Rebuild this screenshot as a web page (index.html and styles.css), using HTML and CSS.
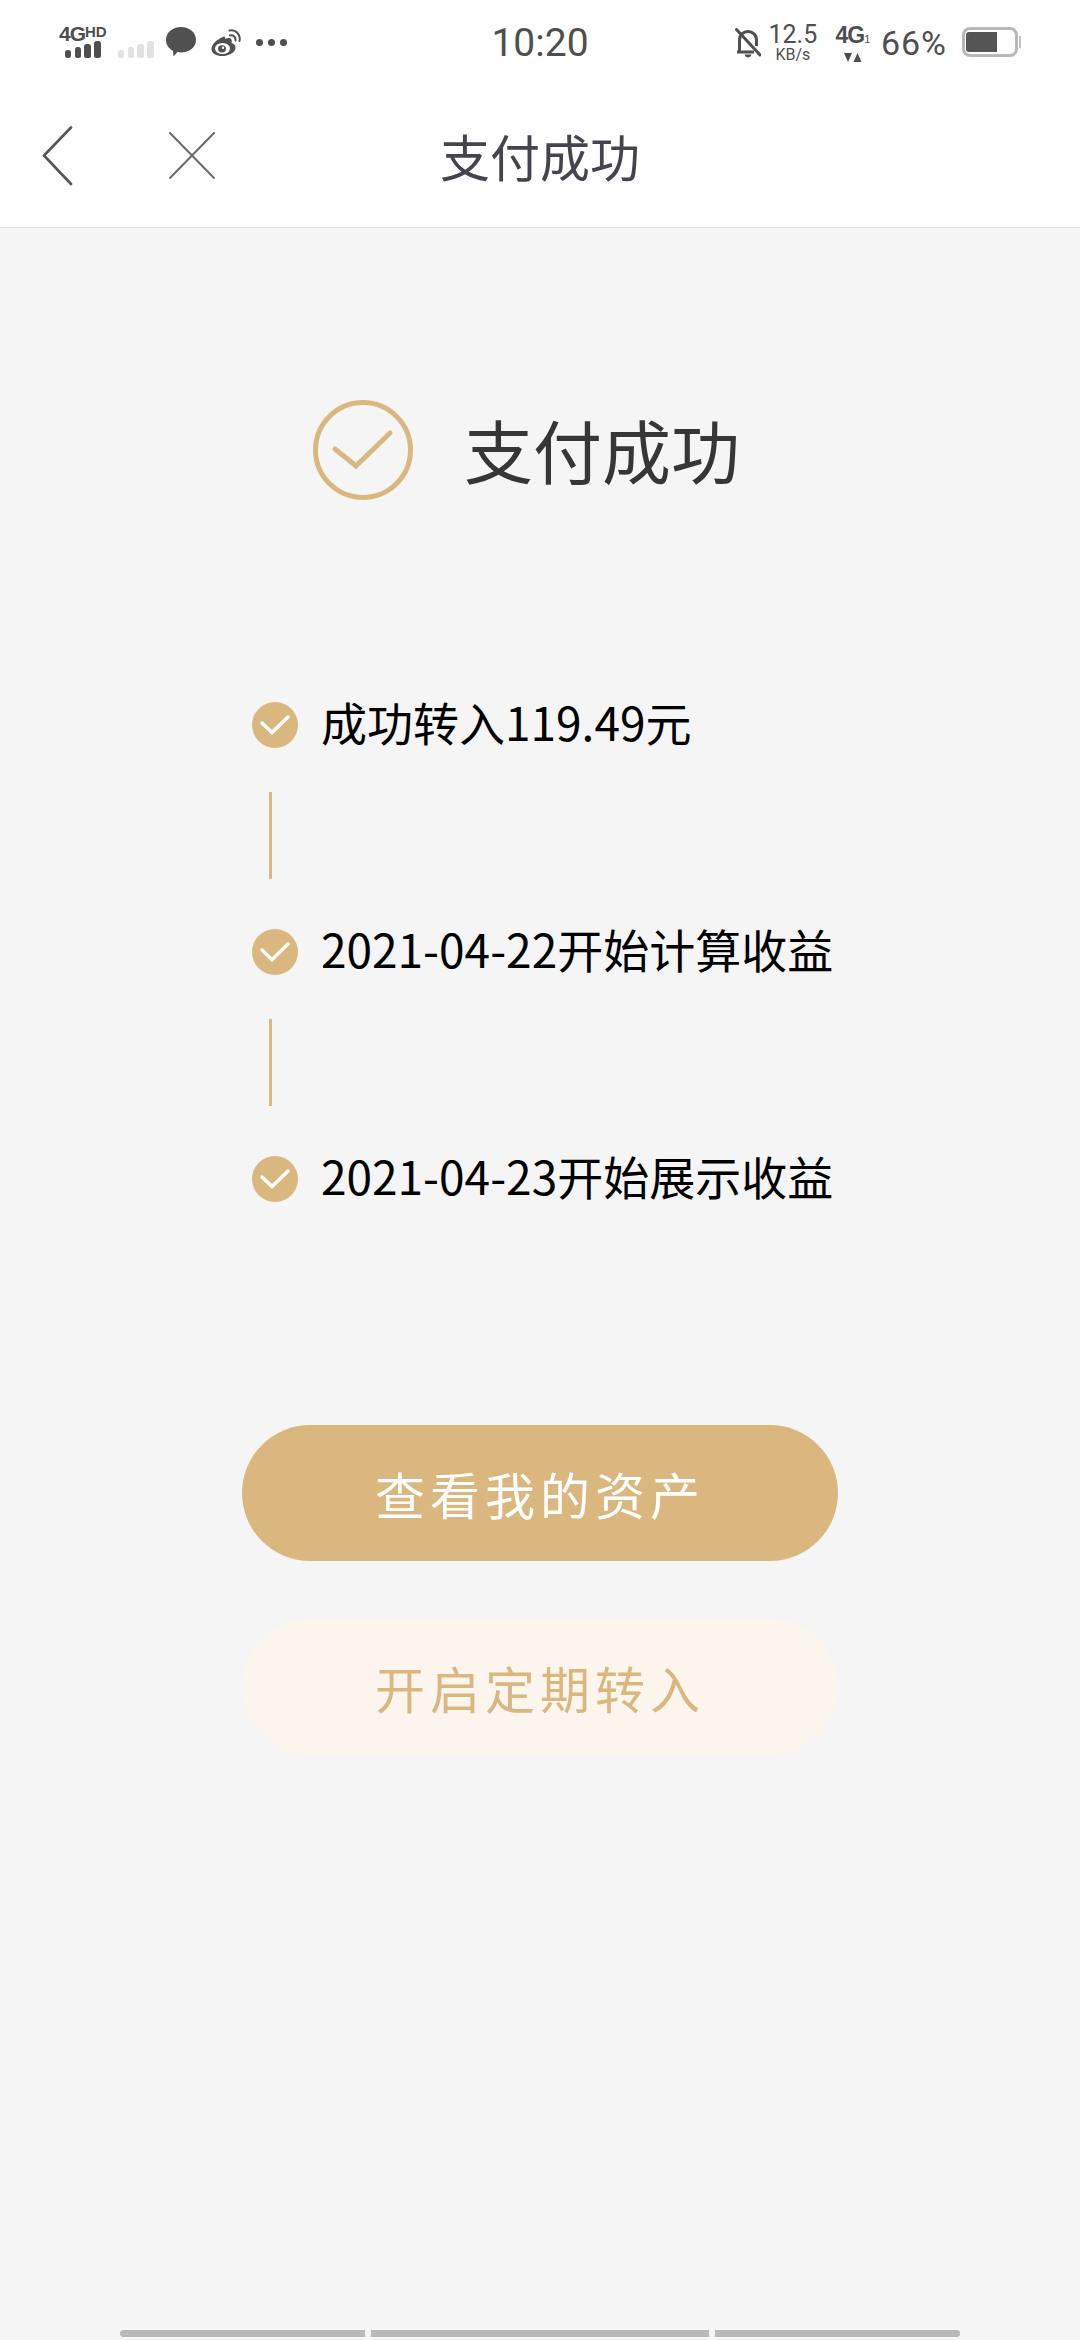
FILE: index.html
```html
<!DOCTYPE html>
<html lang="zh">
<head>
<meta charset="utf-8">
<title>支付成功</title>
<link rel="stylesheet" href="styles.css">
</head>
<body>
<div class="phone">

<div class="statusbar">
	<div class="status-left">
		<div class="net">
			<span class="net-label">4G<sup>HD</sup></span>
			<svg width="36" height="17" viewBox="0 0 36 17"><g fill="#4f4f4f"><rect x="0" y="9" width="6" height="8" rx="2.5"/><rect x="10" y="6" width="6" height="11" rx="2.5"/><rect x="19" y="3" width="7" height="14" rx="2.5"/><rect x="29" y="0" width="7" height="17" rx="2.5"/></g></svg>
		</div>
		<svg class="sig2" width="36" height="17" viewBox="0 0 36 17"><g fill="#e2e2e2"><rect x="0" y="9" width="6" height="8" rx="2.5"/><rect x="10" y="6" width="6" height="11" rx="2.5"/><rect x="19" y="3" width="7" height="14" rx="2.5"/><rect x="29" y="0" width="7" height="17" rx="2.5"/></g></svg>
		<svg class="chat" width="30" height="30" viewBox="0 0 30 30"><path d="M15 0C23.5 0 30 5.5 30 13C30 20.5 23 25.5 15 25.5C13.5 25.5 12.5 25.3 11.5 25.1L7.5 29.5L7 23.8C2.8 21.6 0 17.8 0 13C0 5.5 6.5 0 15 0Z" fill="#505050"/></svg>
		<svg class="weibo" width="30" height="28" viewBox="0 0 30 28"><path d="M12 8C5.5 10.5 0 16 0.5 20.5C1 25 6.5 27.5 12.5 27C19 26.5 24.5 23 24.5 18.5C24.5 15.5 21.5 14.5 20.5 14C21.5 11 20 8.8 17.5 9C15.5 9.2 14 10 14 10C14.5 8 14 6.8 12 8Z" fill="#505050"/><ellipse cx="11.5" cy="19.5" rx="7.5" ry="5.5" fill="#fff"/><ellipse cx="11" cy="19.8" rx="4" ry="3.6" fill="#505050"/><circle cx="12" cy="18.8" r="1.2" fill="#fff"/><path d="M19 6.5C22 5.5 25 8 24.5 11.5M18.5 1.5C24.5 0 30 5.5 28.5 12" fill="none" stroke="#505050" stroke-width="2" stroke-linecap="round"/></svg>
		<div class="dots"><i></i><i></i><i></i></div>
	</div>
	<div class="clock">10:20</div>
	<div class="status-right">
		<svg class="bell" width="26" height="30" viewBox="0 0 26 30"><path d="M4.5 22.5V12C4.5 6.8 8.3 3.5 13 3.5C17.7 3.5 21.5 6.8 21.5 12V18M2 24H19" fill="none" stroke="#4f4f4f" stroke-width="3"/><path d="M1.5 1.5L25 27" stroke="#4f4f4f" stroke-width="3" stroke-linecap="round"/><path d="M9.5 26.5H16.5C16 28.5 14.5 29.5 13 29.5C11.5 29.5 10 28.5 9.5 26.5Z" fill="#4f4f4f"/></svg>
		<div class="speed"><span class="speed-num">12.5</span><span class="speed-unit">KB/s</span></div>
		<div class="net2">
			<span class="net2-label">4G<small>1</small></span>
			<svg width="18" height="9" viewBox="0 0 18 9"><path d="M0 0H8L4 9ZM9.5 9H17.5L13.5 0Z" fill="#4f4f4f"/></svg>
		</div>
		<span class="percent">66%</span>
		<div class="battery">
			<div class="battery-body"><div class="battery-fill"></div></div>
			<div class="battery-cap"></div>
		</div>
	</div>
</div>

<div class="navbar">
	<svg class="nav-back" width="32" height="60" viewBox="0 0 32 60"><path d="M29 1.5L2 29.5L29 58" fill="none" stroke="#55555c" stroke-width="2.6" stroke-linecap="round" stroke-linejoin="round"/></svg>
	<svg class="nav-close" width="46" height="48" viewBox="0 0 46 48"><path d="M1 1L45 46M45 1L1 46" fill="none" stroke="#6a6a70" stroke-width="2" stroke-linecap="round"/></svg>
	<h1 class="nav-title">支付成功</h1>
</div>

<div class="content">
	<div class="result">
		<svg width="100" height="100" viewBox="0 0 100 100"><circle cx="50" cy="50" r="47.5" fill="none" stroke="#dab77f" stroke-width="5"/><path d="M22 49L43 66L77 33" fill="none" stroke="#dab77f" stroke-width="5" stroke-linecap="round"/></svg>
		<span class="result-text">支付成功</span>
	</div>

	<ul class="steps">
		<li class="step">
			<svg class="step-icon" width="46" height="46" viewBox="0 0 46 46"><circle cx="23" cy="23" r="23" fill="#dab77f"/><path d="M10 21L20 30.5L36 15" fill="none" stroke="#fff" stroke-width="3.5" stroke-linecap="round"/></svg>
			<span>成功转入119.49元</span>
		</li>
		<li class="step-line"></li>
		<li class="step">
			<svg class="step-icon" width="46" height="46" viewBox="0 0 46 46"><circle cx="23" cy="23" r="23" fill="#dab77f"/><path d="M10 21L20 30.5L36 15" fill="none" stroke="#fff" stroke-width="3.5" stroke-linecap="round"/></svg>
			<span>2021-04-22开始计算收益</span>
		</li>
		<li class="step-line"></li>
		<li class="step">
			<svg class="step-icon" width="46" height="46" viewBox="0 0 46 46"><circle cx="23" cy="23" r="23" fill="#dab77f"/><path d="M10 21L20 30.5L36 15" fill="none" stroke="#fff" stroke-width="3.5" stroke-linecap="round"/></svg>
			<span>2021-04-23开始展示收益</span>
		</li>
	</ul>

	<div class="actions">
		<a class="btn btn-main">查看我的资产</a>
		<a class="btn btn-light">开启定期转入</a>
	</div>
</div>

<div class="bottom-bar"><i class="seg1"></i><i class="seg2"></i><i class="seg3"></i></div>

</div>
</body>
</html>
```

FILE: styles.css
```css
* {
	box-sizing: border-box;
}
html, body {
	margin: 0;
	padding: 0;
}
body {
	font-family: "Noto Sans CJK SC", "Noto Sans", sans-serif;
}
.phone {
	width: 1080px;
	height: 2340px;
	background-color: #f5f5f5;
	display: flex;
	flex-direction: column;
}

/* status bar */
.statusbar {
	height: 80px;
	background-color: #fff;
	position: relative;
	display: flex;
	justify-content: space-between;
	align-items: flex-start;
	padding: 24px 59px 0 59px;
	color: #4f4f4f;
}
.status-left {
	display: flex;
	align-items: flex-start;
}
.net {
	width: 47px;
	display: flex;
	flex-direction: column;
	align-items: flex-start;
}
.net-label {
	font-family: "Liberation Sans", sans-serif;
	font-weight: bold;
	font-size: 21px;
	line-height: 18px;
	letter-spacing: -1px;
	margin-top: 1px;
	white-space: nowrap;
}
.net-label sup {
	font-size: 15px;
	line-height: 0;
	vertical-align: 4px;
	letter-spacing: 0;
}
.net svg {
	margin: -2px 0 0 6px;
}
.sig2 {
	margin: 17px 0 0 12px;
}
.chat {
	margin: 3px 0 0 12px;
}
.weibo {
	margin: 5px 0 0 15px;
}
.dots {
	display: flex;
	gap: 5px;
	margin: 15px 0 0 15px;
}
.dots i {
	width: 7px;
	height: 7px;
	border-radius: 50%;
	background-color: #4f4f4f;
}
.clock {
	position: absolute;
	left: 0;
	right: 0;
	top: 21px;
	text-align: center;
	font-family: Roboto, sans-serif;
	font-size: 39px;
	line-height: 44px;
}
.status-right {
	display: flex;
	align-items: flex-start;
}
.bell {
	margin-top: 4px;
}
.speed {
	display: flex;
	flex-direction: column;
	align-items: center;
	width: 48px;
	margin-left: 8px;
	font-family: Roboto, sans-serif;
}
.speed-num {
	font-size: 25px;
	line-height: 26px;
	margin-top: -2px;
}
.speed-unit {
	font-size: 16px;
	line-height: 13px;
}
.net2 {
	display: flex;
	flex-direction: column;
	align-items: center;
	width: 34px;
	margin-left: 19px;
}
.net2-label {
	font-family: "Liberation Sans", sans-serif;
	font-weight: bold;
	font-size: 23px;
	line-height: 24px;
	letter-spacing: -1px;
	margin-top: -1px;
	white-space: nowrap;
}
.net2-label small {
	font-size: 11px;
	font-weight: normal;
	letter-spacing: 0;
}
.net2 svg {
	margin-top: 2px;
}
.percent {
	font-family: Roboto, sans-serif;
	font-size: 34px;
	line-height: 38px;
	letter-spacing: 1px;
	margin-left: 11px;
}
.battery {
	display: flex;
	align-items: center;
	margin: 3px 0 0 15px;
}
.battery-body {
	width: 56px;
	height: 30px;
	border: 3px solid #b8b8b8;
	border-radius: 8px;
	padding: 2px 1px;
}
.battery-fill {
	width: 31px;
	height: 20px;
	background-color: #555;
	border-radius: 3px 0 0 3px;
}
.battery-cap {
	width: 2px;
	height: 12px;
	margin-left: 1px;
	background-color: #c4c4c4;
}

/* nav */
.navbar {
	height: 148px;
	background-color: #fff;
	border-bottom: 1px solid #e2e2e2;
	position: relative;
	display: flex;
	align-items: flex-start;
	padding: 46px 0 0 42px;
}
.nav-back {
	flex: none;
}
.nav-close {
	flex: none;
	margin: 6px 0 0 95px;
}
.nav-title {
	position: absolute;
	left: 0;
	right: 0;
	top: 45px;
	margin: 0;
	text-align: center;
	font-size: 50px;
	line-height: 60px;
	font-weight: 400;
	color: #44444e;
}

/* main */
.content {
	flex: 1;
	display: flex;
	flex-direction: column;
	align-items: center;
}
.result {
	display: flex;
	align-items: center;
	margin-top: 172px;
	margin-left: -27px;
	gap: 51px;
}
.result-text {
	font-size: 69px;
	line-height: 100px;
	margin-top: -3px;
	color: #363636;
}
.steps {
	list-style: none;
	margin: 202px 0 0 0;
	padding: 0;
	width: 576px;
}
.step {
	display: flex;
	align-items: center;
	height: 46px;
	gap: 23px;
	font-size: 46px;
	color: #000;
	white-space: nowrap;
}
.step span {
	margin-top: -9px;
}
.step-icon {
	flex: none;
}
.step-line {
	width: 3px;
	height: 87px;
	margin: 44px 0 50px 17px;
	background-color: #dab77f;
}
.actions {
	margin-top: 223px;
	display: flex;
	flex-direction: column;
	gap: 58px;
}
.btn {
	display: block;
	width: 596px;
	height: 136px;
	border-radius: 68px;
	text-align: center;
	font-size: 50px;
	line-height: 136px;
	letter-spacing: 5px;
}
.btn-main {
	background-color: #dab77f;
	color: #fff;
}
.btn-light {
	background-color: #fbf5ed;
	color: #dab77f;
}

.bottom-bar {
	display: flex;
	gap: 6px;
	padding-left: 120px;
	height: 10px;
}
.bottom-bar i {
	height: 7px;
	background-color: #b9b9b9;
}
.seg1 {
	width: 245px;
	border-radius: 4px 0 0 4px;
}
.seg2 {
	width: 338px;
}
.seg3 {
	width: 245px;
	border-radius: 0 4px 4px 0;
}
```
